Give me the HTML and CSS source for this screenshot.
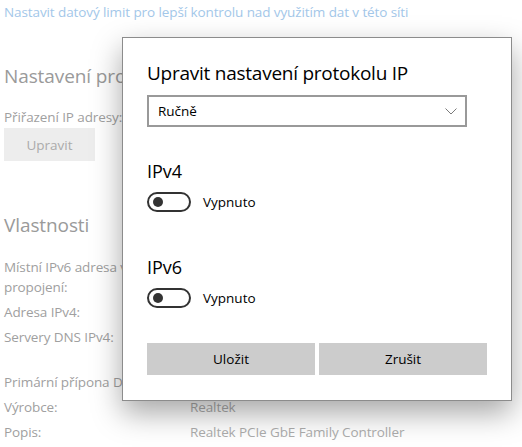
FILE: index.html
```html
<!DOCTYPE html>
<html lang="cs">
<head>
<meta charset="utf-8">
<title>Upravit nastavení protokolu IP</title>
<link rel="stylesheet" href="styles.css">
</head>
<body>
<div class="page">
  <a class="link" href="#">Nastavit datový limit pro lepší kontrolu nad využitím dat v této síti</a>
  <h2 class="section-title first">Nastavení protokolu IP</h2>
  <div class="label">Přiřazení IP adresy:</div>
  <button class="ghost-btn">Upravit</button>
  <h2 class="section-title props-title">Vlastnosti</h2>
  <div class="props">
    <div class="pl">Místní IPv6 adresa v rámci propojení:</div><div class="pv"></div>
    <div class="pl">Adresa IPv4:</div><div class="pv"></div>
    <div class="pl two">Servery DNS IPv4:</div><div class="pv"></div>
    <div class="pl">Primární přípona DNS:</div><div class="pv"></div>
    <div class="pl">Výrobce:</div><div class="pv">Realtek</div>
    <div class="pl">Popis:</div><div class="pv">Realtek PCIe GbE Family Controller</div>
  </div>
</div>

<div class="dialog">
  <h1 class="dlg-title">Upravit nastavení protokolu IP</h1>
  <div class="select">
    <span>Ručně</span>
    <svg class="chev" width="12" height="7" viewBox="0 0 12 7"><path d="M0.5 0.5 L6 6 L11.5 0.5" fill="none" stroke="#7a7a7a" stroke-width="1"/></svg>
  </div>
  <div class="proto">
    <h3 class="proto-title">IPv4</h3>
    <div class="toggle-row"><span class="toggle"><span class="knob"></span></span><span class="toggle-label">Vypnuto</span></div>
  </div>
  <div class="proto second">
    <h3 class="proto-title">IPv6</h3>
    <div class="toggle-row"><span class="toggle"><span class="knob"></span></span><span class="toggle-label">Vypnuto</span></div>
  </div>
  <div class="actions">
    <button class="btn">Uložit</button>
    <button class="btn">Zrušit</button>
  </div>
</div>
</body>
</html>
```
FILE: styles.css
```css
* { box-sizing: border-box; }
html, body {
  margin: 0;
  padding: 0;
  background: #fff;
  width: 522px;
  height: 447px;
  overflow: hidden;
}
body {
  font-family: "Open Sans", "Noto Sans", sans-serif;
  font-size: 13.5px;
  letter-spacing: -0.1px;
  line-height: 20px;
  color: #000;
  position: relative;
}
.page {
  padding: 0 4px;
  color: #a0a0a0;
}
.link {
  display: block;
  margin-top: 2px;
  color: #a3c7e9;
  text-decoration: none;
  white-space: nowrap;
}
.section-title {
  margin: 0;
  font-weight: 400;
  font-size: 19px;
  line-height: 28px;
  color: #9a9a9a;
  white-space: nowrap;
}
.section-title.first { margin-top: 40px; }
.label { margin-top: 17px; white-space: nowrap; }
.ghost-btn {
  display: block;
  margin-top: 1px;
  width: 91px;
  height: 33px;
  border: none;
  background: #ededed;
  color: #ababab;
  font: inherit;
  padding: 0;
}
.props-title { margin-top: 50px; }
.props {
  margin-top: 18px;
  display: grid;
  grid-template-columns: 186px 1fr;
  row-gap: 5px;
}
.pl { padding-right: 6px; }
.pl.two { min-height: 40px; }
.pv { color: #adadad; }

.dialog {
  position: absolute;
  left: 122px;
  top: 37px;
  width: 390px;
  height: 364px;
  background: #fff;
  border: 1px solid #8c8c8c;
  box-shadow: 0 12px 28px rgba(0,0,0,0.35);
  padding: 21px 24px 0 24px;
  letter-spacing: 0;
}
.dlg-title {
  margin: 0;
  font-weight: 400;
  font-size: 19px;
  letter-spacing: -0.25px;
  line-height: 28px;
  color: #000;
  white-space: nowrap;
}
.select {
  margin-top: 8px;
  width: 320px;
  height: 32px;
  border: 2px solid #999;
  display: flex;
  align-items: center;
  justify-content: space-between;
  padding: 0 8px 0 9px;
  color: #000;
}
.chev { display: block; margin-top: 1px; }
.proto { margin-top: 32px; }
.proto.second { margin-top: 43px; }
.proto-title {
  margin: 0;
  font-weight: 400;
  font-size: 18px;
  line-height: 24px;
  color: #000;
}
.toggle-row {
  margin-top: 9px;
  display: flex;
  align-items: center;
  gap: 12px;
  height: 20px;
}
.toggle {
  width: 44px;
  height: 20px;
  border: 2px solid #333;
  border-radius: 10px;
  display: flex;
  align-items: center;
  padding-left: 4px;
}
.knob {
  width: 10px;
  height: 10px;
  border-radius: 50%;
  background: #333;
}
.toggle-label { color: #000; }
.actions {
  margin-top: 35px;
  display: grid;
  grid-template-columns: 1fr 1fr;
  gap: 4px;
}
.btn {
  height: 32px;
  border: none;
  background: #cccccc;
  color: #000;
  font: inherit;
  padding: 0;
}
```
